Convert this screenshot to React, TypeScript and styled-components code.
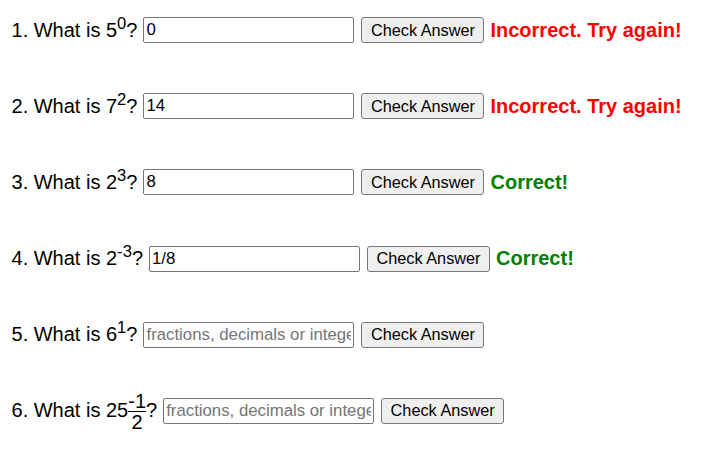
import React from "react";
import styled, { createGlobalStyle } from "styled-components";

const GlobalStyle = createGlobalStyle`
  html, body {
    margin: 0;
    padding: 0;
    background: #ffffff;
  }
  body {
    font-family: "Liberation Sans", Arial, sans-serif;
    color: #000000;
  }
`;

const Page = styled.div`
  display: flex;
  flex-direction: column;
  gap: 16.2px;
  padding: 0 0 0 11.5px;
`;

const Row = styled.div`
  display: flex;
  align-items: center;
  height: 60px;
`;

const Label = styled.div`
  display: flex;
  align-items: center;
  font-size: 20px;
  line-height: 23px;
  white-space: nowrap;
  margin-right: 6px;
`;

const Text = styled.span`
  display: inline-block;
  line-height: 23px;
`;

const Sup = styled.sup`
  font-size: 0.83em;
  line-height: 0;
  vertical-align: super;
`;

const Fraction = styled.span`
  display: flex;
  flex-direction: column;
  align-items: center;
  font-size: 20px;
  line-height: 20px;
  margin-top: 2px;
`;

const Numerator = styled.span`
  border-bottom: 1px solid #000;
`;

const Denominator = styled.span``;

const AnswerInput = styled.input`
  box-sizing: border-box;
  width: 211px;
  height: 26px;
  padding: 1px 2px;
  margin: 0 7px 0 0;
  border: 1px solid #767676;
  border-radius: 2px;
  font-family: "Liberation Sans", Arial, sans-serif;
  font-size: 16.8px;
  color: #000;
  background: #fff;
  outline: none;
  &::placeholder {
    color: #757575;
  }
`;

const CheckButton = styled.button`
  box-sizing: border-box;
  width: 123px;
  height: 26px;
  padding: 0;
  margin: 0 6px 0 0;
  border: 1px solid #767676;
  border-radius: 3px;
  background: #efefef;
  font-family: "Liberation Sans", Arial, sans-serif;
  font-size: 16.3px;
  color: #000;
  cursor: pointer;
`;

const Feedback = styled.span<{ $ok: boolean }>`
  font-size: 20px;
  font-weight: bold;
  line-height: 23px;
  white-space: nowrap;
  color: ${(p) => (p.$ok ? "#008000" : "#ff0000")};
`;

type Q = {
  n: number;
  base: string;
  exp?: string;
  frac?: [string, string];
  value: string;
  status?: "ok" | "bad";
};

const questions: Q[] = [
  { n: 1, base: "5", exp: "0", value: "0", status: "bad" },
  { n: 2, base: "7", exp: "2", value: "14", status: "bad" },
  { n: 3, base: "2", exp: "3", value: "8", status: "ok" },
  { n: 4, base: "2", exp: "-3", value: "1/8", status: "ok" },
  { n: 5, base: "6", exp: "1", value: "" },
  { n: 6, base: "25", frac: ["-1", "2"], value: "" },
];

export default function App() {
  return (
    <>
      <GlobalStyle />
      <Page>
        {questions.map((q) => (
          <Row key={q.n}>
            {q.frac ? (
              <Label>
                <Text>
                  {q.n}. What is {q.base}
                </Text>
                <Fraction>
                  <Numerator>{q.frac[0]}</Numerator>
                  <Denominator>{q.frac[1]}</Denominator>
                </Fraction>
                <Text>?</Text>
              </Label>
            ) : (
              <Label>
                <Text>
                  {q.n}. What is {q.base}
                  <Sup>{q.exp}</Sup>?
                </Text>
              </Label>
            )}
            <AnswerInput
              type="text"
              defaultValue={q.value}
              placeholder="fractions, decimals or integers"
            />
            <CheckButton>Check Answer</CheckButton>
            {q.status === "bad" && <Feedback $ok={false}>Incorrect. Try again!</Feedback>}
            {q.status === "ok" && <Feedback $ok={true}>Correct!</Feedback>}
          </Row>
        ))}
      </Page>
    </>
  );
}
